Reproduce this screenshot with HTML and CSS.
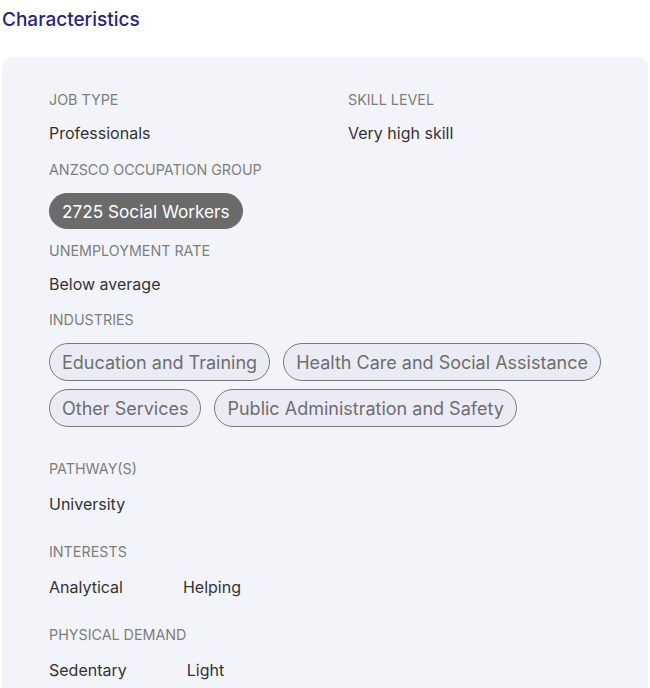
FILE: index.html
```html
<!DOCTYPE html>
<html lang="en">
<head>
  <meta charset="UTF-8">
  <title>Characteristics</title>
  <link rel="stylesheet" href="styles.css">
</head>
<body>

  <h2 class="titulo">Characteristics</h2>

  <div class="tarjeta">
    <div class="fila">
      <div class="campo col">
        <div class="etiqueta">JOB TYPE</div>
        <div class="valor">Professionals</div>
      </div>
      <div class="campo">
        <div class="etiqueta">SKILL LEVEL</div>
        <div class="valor">Very high skill</div>
      </div>
    </div>

    <div class="campo con-chips">
      <div class="etiqueta">ANZSCO OCCUPATION GROUP</div>
      <div class="chips">
        <span class="chip oscuro">2725 Social Workers</span>
      </div>
    </div>

    <div class="campo">
      <div class="etiqueta">UNEMPLOYMENT RATE</div>
      <div class="valor">Below average</div>
    </div>

    <div class="campo">
      <div class="etiqueta">INDUSTRIES</div>
      <div class="chips">
        <span class="chip">Education and Training</span>
        <span class="chip">Health Care and Social Assistance</span>
        <span class="chip">Other Services</span>
        <span class="chip">Public Administration and Safety</span>
      </div>
    </div>

    <div class="grupo">
      <div class="campo">
        <div class="etiqueta">PATHWAY(S)</div>
        <div class="valor">University</div>
      </div>

      <div class="campo">
        <div class="etiqueta">INTERESTS</div>
        <div class="lista">
          <span class="valor">Analytical</span>
          <span class="valor">Helping</span>
        </div>
      </div>

      <div class="campo">
        <div class="etiqueta">PHYSICAL DEMAND</div>
        <div class="lista">
          <span class="valor">Sedentary</span>
          <span class="valor">Light</span>
        </div>
      </div>
    </div>
  </div>

</body>
</html>
```

FILE: styles.css
```css
body {
  font-family: Inter, "Open Sans", sans-serif;
  margin: 0;
  padding: 8px 2px 0 2px;
  background: #fff;
}
.titulo {
  color: #2a2574;
  font-size: 19px;
  font-weight: 500;
  line-height: 24px;
  margin: 0 0 25px 0;
}
.tarjeta {
  background-color: #f3f4f9;
  border-radius: 10px;
  padding: 33px 36px 40px 47px;
  min-height: 700px;
}
.fila {
  display: flex;
  margin-bottom: 17px;
}
.fila .campo {
  margin-bottom: 0;
}
.fila .col {
  flex: none;
  width: 299px;
}
.campo {
  margin-bottom: 16px;
}
.campo.con-chips {
  margin-bottom: 12px;
}
.etiqueta {
  color: #7d7d7d;
  font-size: 14.3px;
  line-height: 20px;
  margin-bottom: 13px;
}
.valor {
  color: #333;
  font-size: 16px;
  line-height: 20px;
}
.chips {
  display: flex;
  flex-wrap: wrap;
  gap: 8px 13px;
}
.chip {
  display: inline-flex;
  align-items: center;
  height: 38px;
  padding: 0 12px;
  border: 1px solid #7a7a7a;
  border-radius: 20px;
  background-color: #ebebf5;
  color: #6e6e6e;
  font-size: 18px;
  box-sizing: border-box;
  white-space: nowrap;
}
.chip.oscuro {
  height: 36px;
  background-color: #6b6b6b;
  color: #fff;
  border-color: #6b6b6b;
  font-size: 17.2px;
}
.grupo {
  padding-top: 16px;
}
.grupo .campo {
  margin-bottom: 28px;
}
.grupo .etiqueta {
  margin-bottom: 15px;
}
.lista {
  display: flex;
  gap: 60px;
}
```
